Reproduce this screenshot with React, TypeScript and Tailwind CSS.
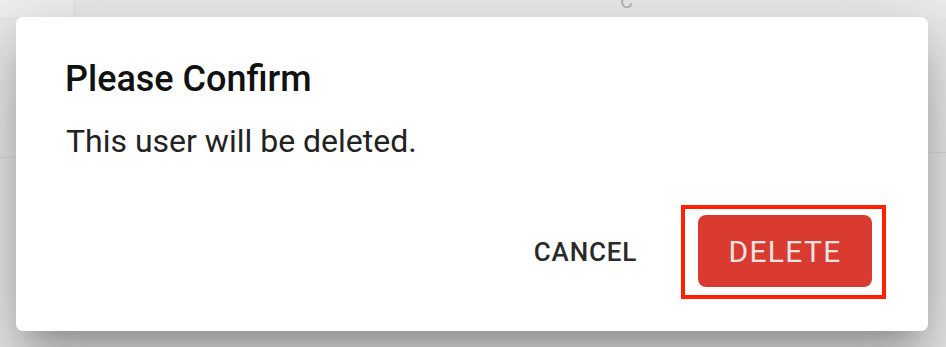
import React from "react";

const font = { fontFamily: "Roboto, 'Noto Sans', Arial, sans-serif" };

function ConfirmDialog() {
  return (
    <div className="w-[912px] h-[314px] bg-white rounded-[7px] flex flex-col pt-[34px] shadow-[0_19px_26px_-12px_rgba(0,0,0,0.22),0_42px_66px_5px_rgba(0,0,0,0.16),0_16px_80px_14px_rgba(0,0,0,0.12)]">
      {/* Title */}
      <h2 className="pl-[49px] text-[36px] leading-[56px] font-medium text-[#111111]">
        Please Confirm
      </h2>

      {/* Body */}
      <p className="mt-[10px] pl-[50px] text-[32px] leading-[48px] text-[#222222]">
        This user will be deleted.
      </p>

      {/* Actions */}
      <div className="mt-auto mb-[32px] mr-[42px] flex items-center justify-end">
        <button className="mr-[44px] text-[26px] font-medium tracking-[0.8px] text-[#2a2a2a] uppercase">
          Cancel
        </button>
        <div className="border-[4px] border-[#ff2200] pl-[13px] pr-[10px] pt-[6px] pb-[8px] flex">
          <button className="w-[174px] h-[72px] rounded-[8px] bg-[#d93b31] text-[30px] tracking-[1.3px] text-[#e8e4e2] flex items-center justify-center">
            DELETE
          </button>
        </div>
      </div>
    </div>
  );
}

export default function App() {
  return (
    <div
      className="relative w-[946px] h-[347px] overflow-hidden bg-[#ebebeb]"
      style={font}
    >
      {/* dimmed page behind the dialog */}
      <div className="absolute inset-0 pointer-events-none">
        <div className="absolute left-0 top-0 w-[75px] h-[17px] bg-[#f1f1f1] border-r border-[#e2e2e2]" />
        <div className="absolute left-[75px] top-0 right-0 h-[17px] bg-[#ededed]" />
        <div className="absolute left-0 top-[157px] w-[16px] border-t border-[#dcdcdc]" />
        <div className="absolute right-0 top-[152px] w-[18px] border-t border-[#dcdcdc]" />
        <span className="absolute left-[620px] -top-[14px] text-[20px] text-[#b8b8b8]">C</span>
      </div>

      <div className="relative pt-[17px] pl-[16px]">
        <ConfirmDialog />
      </div>
    </div>
  );
}
